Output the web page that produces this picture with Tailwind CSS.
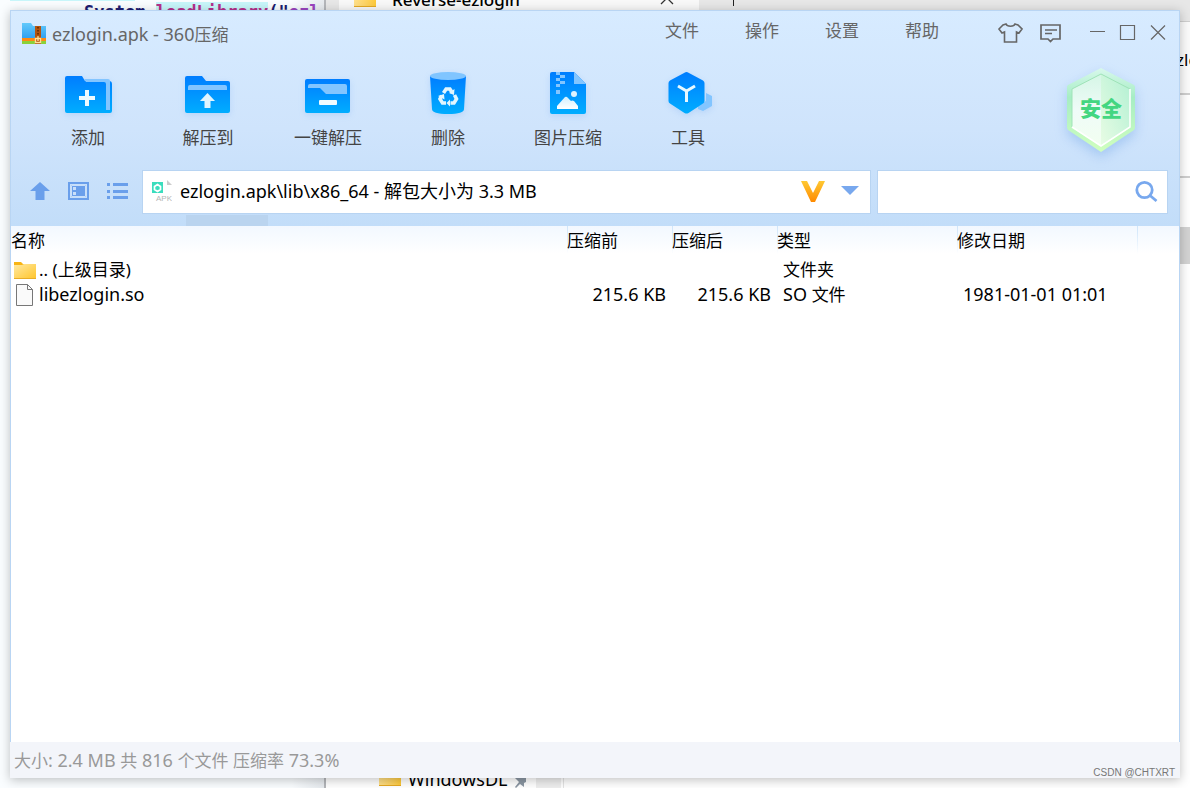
<!DOCTYPE html>
<html lang="zh-CN">
<head>
<meta charset="utf-8">
<title>ezlogin.apk - 360压缩</title>
<script src="https://cdn.jsdelivr.net/npm/@tailwindcss/browser@4"></script>
</head>
<body class="relative h-screen overflow-hidden bg-white font-['Noto_Sans','Noto_Sans_CJK_SC',sans-serif] text-[18px] text-black">

<!-- Windows behind -->
<div class="absolute inset-0 overflow-hidden" aria-hidden="true">
  <div class="absolute inset-y-0 left-0 w-[326px] overflow-hidden border-r-2 border-[#b4b6ba] bg-linear-to-r from-[#fafdff] from-90% to-[#e6eaee]">
    <div class="absolute left-[10px] top-0 h-px w-[125px] bg-[#c8f6fa]"></div>
    <div class="absolute left-[84px] top-[2px] whitespace-nowrap font-['DejaVu_Sans_Mono',monospace] text-[17px] leading-5 font-bold text-[#1c1c70]">System.<span class="bg-[#c8f6fa] text-[#b5308c]">loadLibrary</span>(<span>"</span><span class="text-[#9a45c0]">ezl</span></div>
  </div>
  <div class="absolute inset-y-0 left-[326px] right-0 bg-white">
    <div class="flex h-[22px] border-b border-[#cfcfcf] bg-[#e7e7e7] pl-[13px]">
      <div class="relative flex w-[360px] bg-[#f8f8f8]">
        <span class="absolute left-[15px] top-0 h-[7px] w-[22px] border-b border-[#e5a823] bg-linear-to-r from-[#ffe08a] to-[#fdc936]"></span>
        <span class="absolute left-[53px] top-[-12px] text-[17px] font-medium leading-6">Reverse-ezlogin</span>
        <svg class="absolute left-[321px] top-[-8px]" width="14" height="13" fill="none" stroke="#333" stroke-width="1.3"><path d="M1 0l12 12M13 0L1 12"/></svg>
      </div>
      <span class="ml-[34px] h-[6px] w-px bg-[#222]"></span>
    </div>
    <div class="absolute right-0 top-[22px] flex h-[242px] w-[12px] flex-col bg-white">
      <div class="relative h-[73px] overflow-hidden border-b-2 border-[#cfcfcf] bg-[#fbfbfb]"><span class="absolute left-[-2px] top-[26px] text-[17px] leading-6">zlo</span></div>
      <div class="h-[83px] border-b-2 border-[#cfcfcf]"></div>
      <div class="mt-auto h-[37px] bg-[#d3d3d3]"></div>
    </div>
    <div class="absolute bottom-0 left-[53px] flex h-[10px] items-start overflow-hidden">
      <span class="h-[8px] w-[22px] border-b border-[#e5a823] bg-linear-to-r from-[#ffe08a] to-[#fdc936]"></span>
      <span class="-mt-[11px] ml-[7px] w-[104px] overflow-hidden text-[18px] leading-6">WindowsDL</span>
      <svg class="ml-[2px]" width="14" height="10" fill="#8b97a3"><path d="M1 0h11v4l-2 1 0 4-4-3-4 4-1-1 4-5z"/></svg>
      <span class="ml-[8px] h-full w-[25px] bg-[#eee]"></span>
      <span class="ml-[2px] h-full w-px bg-[#e4e4e4]"></span>
    </div>
  </div>
</div>

<!-- Archive manager window -->
<div class="relative h-full p-[10px]">
<main class="flex h-full flex-col bg-white shadow-[0_2px_10px_rgba(0,0,0,0.25)]">
  <div class="flex min-h-0 flex-1 flex-col border border-b-0 border-[#b9d5f3]">
  <header class="relative flex h-[215px] shrink-0 flex-col bg-linear-to-b from-[#d7ebff] via-[#cfe4fc] via-55% to-[#c2ddf9]">
    <div class="flex h-[46px] items-center pl-[11px] pr-[13px]">
      <svg width="24" height="22" viewBox="0 0 24 22">
        <defs><linearGradient id="az" x1="0" y1="0" x2="0" y2="1"><stop offset="0" stop-color="#62c9fb"/><stop offset="1" stop-color="#2f9ff0"/></linearGradient></defs>
        <path d="M0 0h9l2 3h13v13H0z" fill="url(#az)"/><path d="M0 15h24v3H0z" fill="#ff8a12"/><path d="M0 18h24v3H0z" fill="#8bd13a"/>
        <path d="M13 3h6v18h-6z" fill="#b3540e"/><path d="M16 4v11" stroke="#5f2500" stroke-width="1.500" stroke-dasharray="1.500 1.500"/><path d="M13.500 15.500h5v4h-5zM16 13v5" fill="none" stroke="#ffe09a" stroke-width="1.400"/>
      </svg>
      <h1 class="ml-[6px] text-[18px] leading-6 text-[#666]">ezlogin.apk - 360<span class="text-[17px]">压缩</span></h1>
      <nav class="mb-[6px] ml-auto flex text-[17px] leading-6 text-[#666]">
        <button class="w-[80px]">文件</button><button class="w-[80px]">操作</button><button class="w-[80px]">设置</button><button class="w-[80px]">帮助</button>
      </nav>
      <div class="mb-[2px] ml-[35px] flex items-center text-[#666]">
        <button aria-label="皮肤"><svg width="26" height="22" viewBox="0 0 26 22" fill="none" stroke="currentColor" stroke-width="1.600"><path d="M9 2L6 3 2 7l3 4 2.500-1v10h12V10l2.500 1 3-4-4-4-3-1c-1 3-8 3-9 0z"/></svg></button>
        <button aria-label="反馈" class="ml-[17px]"><svg width="22" height="20" viewBox="0 0 22 20" fill="none" stroke="currentColor" stroke-width="1.700"><path d="M1 2h19v14h-7l-2.500 2.500L8 16H1zM5 7h12M5 10.500h7"/></svg></button>
        <button aria-label="最小化" class="ml-[27px]"><svg width="16" height="18" stroke="currentColor"><path d="M1 7.500h15"/></svg></button>
        <button aria-label="最大化" class="ml-[14px]"><svg width="17" height="20" fill="none" stroke="currentColor" stroke-width="1.200"><path d="M1.500 2.500h14v14h-14z"/></svg></button>
        <button aria-label="关闭" class="ml-[14px]"><svg width="16" height="18" stroke="currentColor" stroke-width="1.200"><path d="M1 1.500l14 14M15 1.500l-14 14"/></svg></button>
      </div>
    </div>

    <svg width="0" height="0" class="absolute"><defs>
      <linearGradient id="bl" x1="0" y1="0" x2="0" y2="1"><stop offset="0" stop-color="#007dff"/><stop offset="1" stop-color="#00adff"/></linearGradient>
      <linearGradient id="wh" x1="0" y1="0" x2="0" y2="1"><stop offset="0" stop-color="#d0efff"/><stop offset="1" stop-color="#fff"/></linearGradient>
    </defs></svg>
    <div class="flex h-[102px] pl-[17px] text-[17px] leading-6 text-[#444]">
      <button class="flex w-[120px] flex-col items-center pt-[12px]">
        <svg width="48" height="52" viewBox="0 0 48 52" class="drop-shadow-[0_2px_3px_rgba(40,120,230,0.15)]"><path d="M1 9q0-2 2-2h15l3 5h24q3 0 3 3v27q0 2-2 2H3q-2 0-2-2z" fill="url(#bl)"/><path d="M20 10h24q2 0 2 2v29h-4V15q0-2-2-2H22z" fill="#83c5ff"/><path d="M15 29h16M23 21v16" stroke="#edfaff" stroke-width="4"/></svg>
        <span class="mt-[5px]">添加</span></button>
      <button class="flex w-[120px] flex-col items-center pt-[12px]">
        <svg width="46" height="52" viewBox="0 0 46 52" class="drop-shadow-[0_2px_3px_rgba(40,120,230,0.15)]"><path d="M0 9q0-2 2-2h15l4 5h22q2 0 2 2v28q0 2-2 2H2q-2 0-2-2z" fill="url(#bl)"/><path d="M3 21v-3q0-2 2-2h35q2 0 2 2v3z" fill="#83c5ff"/><path d="M22.500 24L30 32h-4.500v7h-6v-7H15z" fill="#e0f5ff"/></svg>
        <span class="mt-[5px]">解压到</span></button>
      <button class="flex w-[120px] flex-col items-center pt-[12px]">
        <svg width="46" height="52" viewBox="0 0 46 52" class="drop-shadow-[0_2px_3px_rgba(40,120,230,0.15)]"><rect y="10" width="45" height="34" rx="2" fill="url(#bl)"/><path d="M3 19v-2q0-2 2-2h35q2 0 2 2v8H21l-6-6z" fill="#83c5ff"/><rect x="14" y="31" width="18" height="5" rx="1" fill="#f0fbff"/></svg>
        <span class="mt-[5px]">一键解压</span></button>
      <button class="flex w-[120px] flex-col items-center pt-[12px]">
        <svg width="36" height="52" viewBox="0 0 36 52" class="drop-shadow-[0_2px_3px_rgba(40,120,230,0.15)]"><path d="M0 7l2 33q0 5 16 5t16-5l2-33z" fill="url(#bl)"/><ellipse cx="18" cy="7" rx="18" ry="4" fill="#80c5ff"/>
          <g fill="none" stroke="#e2f6ff" stroke-width="3.600"><path d="M13.500 24l2.600-4h3.800l2.200 3.500M24.500 26l2 4-2.500 4h-3.500M16 34h-3.500L10 30l1.800-3.500"/></g><path d="M24.500 20l-.5 6-5-2zM20 30.500v7L16.500 34zM8 27l6-2 .5 5.500z" fill="#e2f6ff"/></svg>
        <span class="mt-[5px]">删除</span></button>
      <button class="flex w-[120px] flex-col items-center pt-[12px]">
        <svg width="36" height="52" viewBox="0 0 36 52" class="drop-shadow-[0_2px_3px_rgba(40,120,230,0.15)]"><path d="M2 3h22l12 12v28q0 2-2 2H2q-2 0-2-2V5q0-2 2-2z" fill="url(#bl)"/><path d="M24 3l12 12H24zM6 3h4v3H6zM10 6h5v3h-5zM6 9h4v3H6zM10 12h5v3h-5zM6 15h4v3H6zM6 21h4v4H6z" fill="#83c5ff"/><path d="M7 40v-3l8-9q1.500-1 3 1l3 3q1-1 3 0l4 5v3z" fill="url(#wh)"/><circle cx="24" cy="25" r="3" fill="#dbf2ff"/></svg>
        <span class="mt-[5px]">图片压缩</span></button>
      <button class="flex w-[120px] flex-col items-center pt-[12px]">
        <svg width="40" height="52" viewBox="0 0 40 52" class="overflow-visible drop-shadow-[0_2px_3px_rgba(40,120,230,0.15)]"><path d="M38 24l6 3v10l-9 5-5-2v-3l8-5z" fill="#83c5ff"/><path d="M16.500 3.700q2-1.200 4 0L35 11.500q1.500 1 1.500 2.500v18q0 1.500-1.500 2.500L20.500 44q-2 1-4 0L2 34.500Q.5 33.500.5 32V14q0-1.500 1.500-2.500z" fill="url(#bl)"/><path d="M10 17l8.500 5 8.500-5M18.500 22v11" stroke="#e8f8ff" stroke-width="3" fill="none"/></svg>
        <span class="mt-[5px]">工具</span></button>
    </div>

    <div class="flex h-[67px] items-start pl-[18px] pr-[11px] pt-[11px]">
      <div class="flex h-[44px] items-center pb-[2px] text-[#6a9feb]">
        <button aria-label="向上"><svg width="22" height="20" viewBox="0 0 22 20" fill="currentColor"><path d="M11 1l10 9h-5.500v9h-9v-9H1z"/></svg></button>
        <button aria-label="预览" class="ml-[17px]"><svg width="21" height="18" viewBox="0 0 21 18"><path d="M1 1h19v16H1z" fill="none" stroke="currentColor" stroke-width="2"/><path d="M3 3h15v12H3z" fill="currentColor"/><path d="M3.500 3.500h14v11h-14z" fill="none" stroke="#c9dffa"/><path d="M5 5h3v3H5zM5 10h3v3H5z" fill="#c9dffa"/></svg></button>
        <button aria-label="列表" class="ml-[18px]"><svg width="21" height="18" viewBox="0 0 21 18" fill="currentColor"><path d="M0 1h3v3H0zM6 1h15v3H6zM0 8h3v3H0zM6 8h15v3H6zM0 14h3v3H0zM6 14h15v3H6z"/></svg></button>
      </div>
      <div class="ml-[14px] flex h-[44px] min-w-0 flex-1 items-center border border-[#b8d4f2] bg-white pb-[2px] pl-[9px] pr-[11px]">
        <svg width="20" height="24" viewBox="0 0 20 24"><path d="M0 3h11v11H0z" fill="#3bddbd"/><path d="M5.500 5.500l3 2v3l-3 2-3-2v-3z" fill="none" stroke="#fff" stroke-width="1.700"/><path d="M15 1l5 5h-5z" fill="#ccc"/><text x="4" y="22" font-size="8" font-family="Liberation Sans" fill="#b5b5b5">APK</text></svg>
        <input aria-label="路径" class="ml-[8px] min-w-0 flex-1 bg-transparent text-[18px] leading-6 outline-none" value="ezlogin.apk\lib\x86_64 - 解包大小为 3.3 MB">
        <svg width="24" height="22" viewBox="0 0 24 22"><defs><linearGradient id="v" x1="0" y1="0" x2="0" y2="1"><stop offset="0" stop-color="#ffc933"/><stop offset="1" stop-color="#ff8a00"/></linearGradient></defs><path d="M0 1h6l6 12 6-12h6L14 22h-4z" fill="url(#v)"/></svg>
        <button aria-label="展开" class="ml-[16px]"><svg width="18" height="14" viewBox="0 0 18 14"><path d="M0 2h18l-9 9z" fill="#78a8ee"/></svg></button>
      </div>
      <div class="ml-[6px] flex h-[44px] w-[291px] items-center border border-[#b8d4f2] bg-white pb-[2px] pr-[9px]">
        <input aria-label="搜索" class="min-w-0 flex-1 bg-transparent px-2 outline-none">
        <button aria-label="搜索"><svg width="24" height="24" viewBox="0 0 24 24" fill="none" stroke="#78a8ee" stroke-width="2.800"><circle cx="10.500" cy="11" r="7.700"/><path d="M16 16.500l6.500 5.500"/></svg></button>
      </div>
    </div>
    <div class="absolute bottom-0 left-[175px] h-[11px] w-[82px] bg-[#bad4ef]"></div>

    <!-- Safety badge -->
    <div class="absolute right-[40px] top-[54px] flex h-[90px] w-[76px] items-center justify-center">
      <svg class="absolute inset-0 drop-shadow-[0_5px_6px_rgba(90,150,225,0.35)]" width="76" height="90" viewBox="0 0 76 90">
        <defs><linearGradient id="g1" x1="0" y1="0" x2="0" y2="1"><stop offset="0" stop-color="#d8f8ec"/><stop offset=".35" stop-color="#a6edc4"/><stop offset="1" stop-color="#d0ffbe"/></linearGradient>
        <linearGradient id="g2" x1="1" y1="0" x2="0" y2="1"><stop offset="0" stop-color="#b2f0d3"/><stop offset="1" stop-color="#e8fce4"/></linearGradient>
        <linearGradient id="g3" x1="0" y1="0" x2="0" y2="1"><stop offset="0" stop-color="#d5f6e6"/><stop offset=".5" stop-color="#effbf8"/><stop offset="1" stop-color="#f2fff0"/></linearGradient></defs>
        <path d="M38 3L71 20q1 1 1 2v40q0 2-1 3L38 87 5 65q-1-1-1-3V22q0-1 1-2z" fill="url(#g1)"/>
        <path d="M38 9L9 24v38l29 19z" fill="url(#g3)"/><path d="M38 9v72l29-19V24z" fill="url(#g2)"/>
        <path d="M9 62V24L38 9l29 15" fill="none" stroke="#9fe3b8"/><path d="M67 24v38L38 81 9 62" fill="none" stroke="#fff" stroke-width="1.500"/>
      </svg>
      <span class="relative mb-[4px] text-[21px] font-black leading-6 text-[#43d681]">安全</span>
    </div>
  </header>

  <div class="min-h-0 flex-1 bg-linear-to-b from-[#f2f8ff] to-white to-[28px]">
    <table class="w-full table-fixed border-collapse text-left leading-[25px]">
      <colgroup><col><col class="w-[105px]"><col class="w-[105px]"><col class="w-[180px]"><col class="w-[180px]"><col class="w-[42px]"></colgroup>
      <thead><tr class="h-[31px] text-[17px] [&>th]:p-0 [&>th]:pb-[3px] [&>th]:font-normal">
        <th>名称</th>
        <th class="bg-linear-to-b from-[#cfe5fa] to-transparent bg-[length:1px_28px] bg-no-repeat">压缩前</th>
        <th class="bg-linear-to-b from-[#cfe5fa] to-transparent bg-[length:1px_28px] bg-no-repeat">压缩后</th>
        <th class="bg-linear-to-b from-[#cfe5fa] to-transparent bg-[length:1px_28px] bg-no-repeat">类型</th>
        <th class="bg-linear-to-b from-[#cfe5fa] to-transparent bg-[length:1px_28px] bg-no-repeat">修改日期</th>
        <th class="bg-linear-to-b from-[#cfe5fa] to-transparent bg-[length:1px_28px] bg-no-repeat"></th>
      </tr></thead>
      <tbody class="[&_td]:h-[25px] [&_td]:p-0">
        <tr><td><a href="#" class="flex h-[25px] items-center pl-[3px]"><svg width="22" height="18" viewBox="0 0 22 18"><defs><linearGradient id="fo" x1="0" y1="0" x2="1" y2="1"><stop offset="0" stop-color="#ffe9a2"/><stop offset="1" stop-color="#ffc62e"/></linearGradient></defs><path d="M0 1h7l2 2h13v3H0z" fill="#f8b414"/><path d="M0 4h8l2-1h12v14H0z" fill="url(#fo)"/><path d="M0 17.500h22" stroke="#e8ad28"/></svg><span class="ml-[3px] text-[17px]">.. (上级目录)</span></a></td><td></td><td></td><td class="text-[17px]"><span class="pl-[6px]">文件夹</span></td><td></td><td></td></tr>
        <tr><td><a href="#" class="flex h-[25px] items-center pl-[5px]"><svg width="18" height="22" viewBox="0 0 18 22"><path d="M.5.500h11l5 5v16H.5z" fill="#fafafa" stroke="#777"/><path d="M11.500.500v5h5" fill="none" stroke="#777"/></svg><span class="ml-[5px]">libezlogin.so</span></a></td><td class="text-right"><span class="pr-[6px]">215.6 KB</span></td><td class="text-right"><span class="pr-[6px]">215.6 KB</span></td><td><span class="pl-[6px]">SO <span class="text-[17px]">文件</span></span></td><td><span class="pl-[6px]">1981-01-01 01:01</span></td><td></td></tr>
      </tbody>
    </table>
  </div>
  </div>

  <footer class="relative flex h-[36px] shrink-0 items-center bg-[#f3f5fa] pl-[4px] text-[18px] leading-6 text-[#999]">
    <p><span class="text-[17px]">大小</span>: 2.4 MB <span class="text-[17px]">共</span> 816 <span class="text-[17px]">个文件 压缩率</span> 73.3%</p>
    <span class="absolute -bottom-[3px] right-[5px] font-['Liberation_Sans',sans-serif] text-[10px] leading-4 text-[#777]">CSDN @CHTXRT</span>
  </footer>
</main>
</div>
</body>
</html>
